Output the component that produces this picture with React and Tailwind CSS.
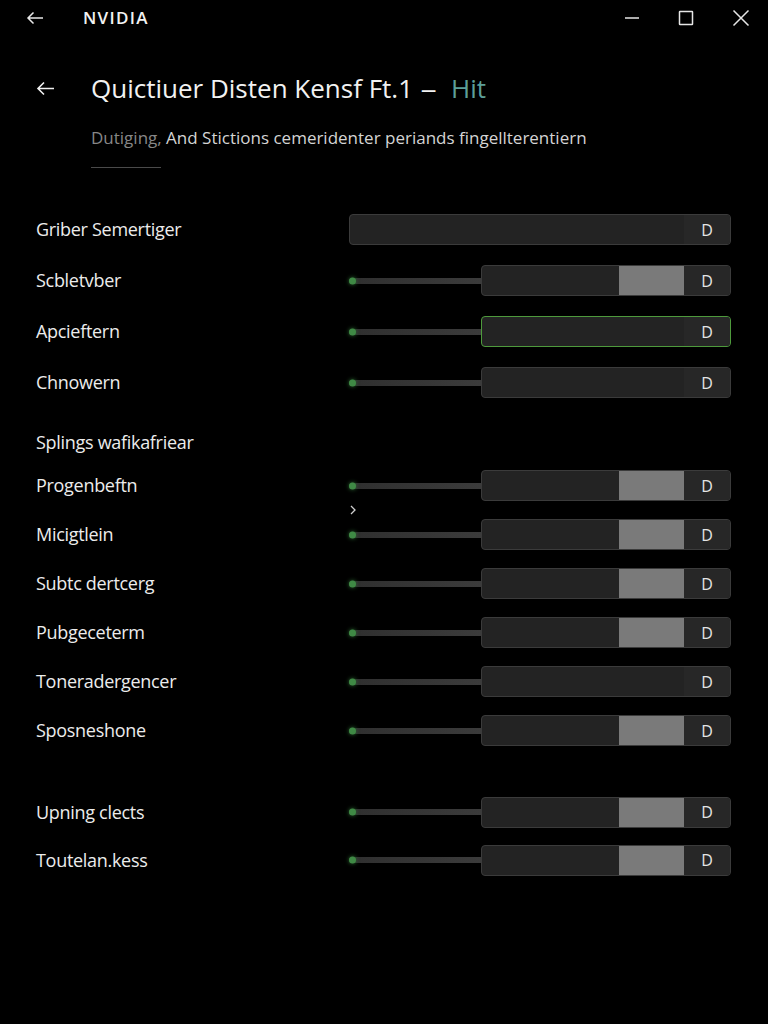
import React from "react";

const font = { fontFamily: '"Open Sans", "Liberation Sans", sans-serif' };

function Slider({ fill, active, full }) {
  if (full) {
    return (
      <div className="flex h-[31px] w-[382px] overflow-hidden rounded-[4px] border border-[#3b3b3b] bg-[#232323]">
        <div className="flex-1" />
        <div className="flex w-[46px] items-center justify-center bg-[#272727] text-[16px] text-[#e4e4e4]">D</div>
      </div>
    );
  }
  return (
    <div className="flex w-[382px] items-center">
      <div className="relative h-[6px] w-[132px] rounded-l-full bg-gradient-to-r from-[#2f2f2f] to-[#3b3b3b]">
        <div className="absolute left-0 top-1/2 h-[7px] w-[7px] -translate-y-1/2 rounded-full bg-[#3f8a45] shadow-[0_0_4px_#2f6f35]" />
      </div>
      <div
        className={
          "flex h-[31px] flex-1 overflow-hidden rounded-[4px] border bg-[#232323] " +
          (active ? "border-[#4e9a3c]" : "border-[#3b3b3b]")
        }
      >
        <div className="flex-1" />
        {fill ? <div className="w-[65px] bg-[#7a7a7a]" /> : null}
        <div className="flex w-[46px] items-center justify-center bg-[#272727] text-[16px] text-[#e4e4e4]">D</div>
      </div>
    </div>
  );
}

function Row({ label, h, ...rest }) {
  return (
    <div className={"flex items-center justify-between pl-[36px] pr-[37px] " + h}>
      <span className="text-[18px] tracking-[-0.3px] text-[#ececec]">{label}</span>
      <Slider {...rest} />
    </div>
  );
}

export default function App() {
  return (
    <div className="min-h-[1024px] w-[768px] bg-black text-white" style={font}>
      {/* Title bar */}
      <div className="flex h-[36px] items-center">
        <div className="ml-[26px] flex w-[18px] items-center justify-center">
          <svg width="18" height="14" viewBox="0 0 18 14" fill="none" stroke="#e8e8e8" strokeWidth="1.5">
            <path d="M17 7H2M7.5 1.5L2 7l5.5 5.5" />
          </svg>
        </div>
        <span className="ml-[39px] text-[17px] font-semibold tracking-[1.3px] text-[#f2f2f2]">NVIDIA</span>
        <div className="ml-auto flex items-center">
          <svg width="16" height="16" viewBox="0 0 16 16" className="mr-[38px]" stroke="#e6e6e6" strokeWidth="1.5">
            <path d="M1 8h14" />
          </svg>
          <svg width="16" height="16" viewBox="0 0 16 16" fill="none" className="mr-[38px]" stroke="#e6e6e6" strokeWidth="1.5">
            <rect x="1.5" y="1.5" width="13" height="13" rx="0.5" />
          </svg>
          <svg width="18" height="18" viewBox="0 0 18 18" className="mr-[18px]" stroke="#e6e6e6" strokeWidth="1.5">
            <path d="M1.5 1.5l15 15M16.5 1.5l-15 15" />
          </svg>
        </div>
      </div>

      {/* Header */}
      <div className="mt-[34px] flex items-center">
        <div className="ml-[35px] flex w-[20px] items-center justify-center">
          <svg width="19" height="15" viewBox="0 0 19 15" fill="none" stroke="#f0f0f0" strokeWidth="1.6">
            <path d="M18 7.5H2M8 1.5L2 7.5l6 6" />
          </svg>
        </div>
        <h1 className="ml-[36px] text-[26px] font-normal leading-[36px] tracking-[0px] text-[#f2f2f2]">
          Quictiuer Disten Kensf Ft.1
          <span className="ml-[9px] inline-block scale-x-125">–</span>
          <span className="ml-[16px] text-[#5c9f99]">Hit</span>
        </h1>
      </div>
      <p className="ml-[91px] mt-[20px] text-[17px] leading-[24px] tracking-[0px] text-[#d4d4d4]">
        <span className="text-[#878787]">Dutiging,</span> And Stictions cemeridenter periands fingellterentiern
      </p>
      <div className="ml-[91px] mt-[17px] h-px w-[70px] bg-[#4a4a4a]" />

      {/* Rows */}
      <div className="mt-[36px]">
        <Row h="h-[51px]" label="Griber Semertiger" full />
        <Row h="h-[51px]" label="Scbletvber" fill />
        <Row h="h-[51px]" label="Apcieftern" active />
        <Row h="h-[51px]" label="Chnowern" />
        <div className="flex h-[53px] items-end pb-[5px] pl-[36px]">
          <span className="text-[18px] tracking-[-0.3px] text-[#ececec]">Splings wafikafriear</span>
        </div>
        <Row h="h-[49px]" label="Progenbeftn" fill />
        <div className="relative h-0">
          <svg width="8" height="10" viewBox="0 0 8 10" fill="none" stroke="#cfcfcf" strokeWidth="1.3" className="absolute left-[349px] top-[-5px]">
            <path d="M2 1l4 4-4 4" />
          </svg>
        </div>
        <Row h="h-[49px]" label="Micigtlein" fill />
        <Row h="h-[49px]" label="Subtc dertcerg" fill />
        <Row h="h-[49px]" label="Pubgeceterm" fill />
        <Row h="h-[49px]" label="Toneradergencer" />
        <Row h="h-[49px]" label="Sposneshone" fill />
        <div className="h-[33px]" />
        <Row h="h-[48px]" label="Upning clects" fill />
        <Row h="h-[48px]" label="Toutelan.kess" fill />
      </div>
    </div>
  );
}
